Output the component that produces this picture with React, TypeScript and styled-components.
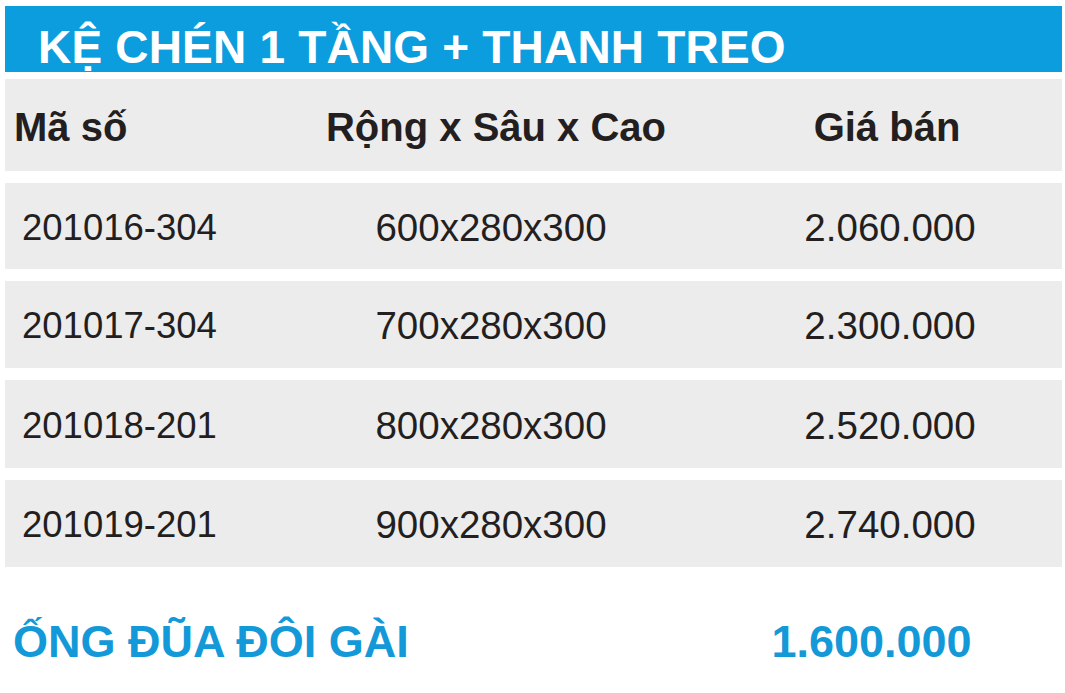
import React from "react";
import styled, { createGlobalStyle } from "styled-components";

const GlobalStyle = createGlobalStyle`
  html, body {
    margin: 0;
    padding: 0;
    background: #ffffff;
  }
  body {
    font-family: "Liberation Sans", Arial, sans-serif;
    color: #231f20;
  }
`;

const Page = styled.div`
  width: 1065px;
  height: 693px;
  padding: 6px 3px 0 5px;
  box-sizing: border-box;
  display: flex;
  flex-direction: column;
`;

const TitleBar = styled.div`
  height: 66px;
  background: #0b9ddd;
  display: flex;
  align-items: center;
  padding: 16px 0 0 33px;
  box-sizing: border-box;
`;

const Title = styled.h1`
  margin: 0;
  font-size: 46px;
  font-weight: 700;
  color: #ffffff;
  letter-spacing: 0.2px;
  line-height: 1;
`;

const Table = styled.div`
  margin-top: 7px;
  display: flex;
  flex-direction: column;
  gap: 12px;
`;

const Row = styled.div<{ $height: number }>`
  height: ${({ $height }) => $height}px;
  background: #ececed;
  display: grid;
  grid-template-columns: 300px 372px 1fr;
  align-items: center;
`;

const Cell = styled.div<{ $head?: boolean; $size: number; $align: "left" | "center"; $indent?: number }>`
  font-size: ${({ $size }) => $size}px;
  font-weight: ${({ $head }) => ($head ? 700 : 400)};
  text-align: ${({ $align }) => $align};
  padding-left: ${({ $indent }) => $indent ?? 0}px;
  padding-top: 4px;
  white-space: nowrap;
  line-height: 1;
`;

const Footer = styled.div`
  flex: 1;
  display: grid;
  grid-template-columns: 672px 1fr;
  align-items: center;
  padding-top: 23px;
`;

const FooterText = styled.div<{ $align: "left" | "center"; $indent?: number }>`
  color: #1499d8;
  font-size: 45px;
  font-weight: 700;
  text-align: ${({ $align }) => $align};
  padding-left: ${({ $indent }) => $indent ?? 0}px;
  line-height: 1;
  white-space: nowrap;
`;

const rows = [
  { code: "201016-304", size: "600x280x300", price: "2.060.000", h: 86 },
  { code: "201017-304", size: "700x280x300", price: "2.300.000", h: 87 },
  { code: "201018-201", size: "800x280x300", price: "2.520.000", h: 88 },
  { code: "201019-201", size: "900x280x300", price: "2.740.000", h: 87 },
];

export default function App() {
  return (
    <>
      <GlobalStyle />
      <Page>
        <TitleBar>
          <Title>KỆ CHÉN 1 TẦNG + THANH TREO</Title>
        </TitleBar>
        <Table>
          <Row $height={92}>
            <Cell $head $size={40} $align="left" $indent={9}>Mã số</Cell>
            <Cell $head $size={40} $align="center" $indent={10}>Rộng x Sâu x Cao</Cell>
            <Cell $head $size={40} $align="center" $indent={35}>Giá bán</Cell>
          </Row>
          {rows.map((r) => (
            <Row key={r.code} $height={r.h}>
              <Cell $size={36.5} $align="left" $indent={17}>{r.code}</Cell>
              <Cell $size={38.5} $align="center" $indent={-4}>{r.size}</Cell>
              <Cell $size={38.5} $align="center" $indent={41}>{r.price}</Cell>
            </Row>
          ))}
        </Table>
        <Footer>
          <FooterText $align="left" $indent={8}>ỐNG ĐŨA ĐÔI GÀI</FooterText>
          <FooterText $align="center" $indent={4}>1.600.000</FooterText>
        </Footer>
      </Page>
    </>
  );
}
